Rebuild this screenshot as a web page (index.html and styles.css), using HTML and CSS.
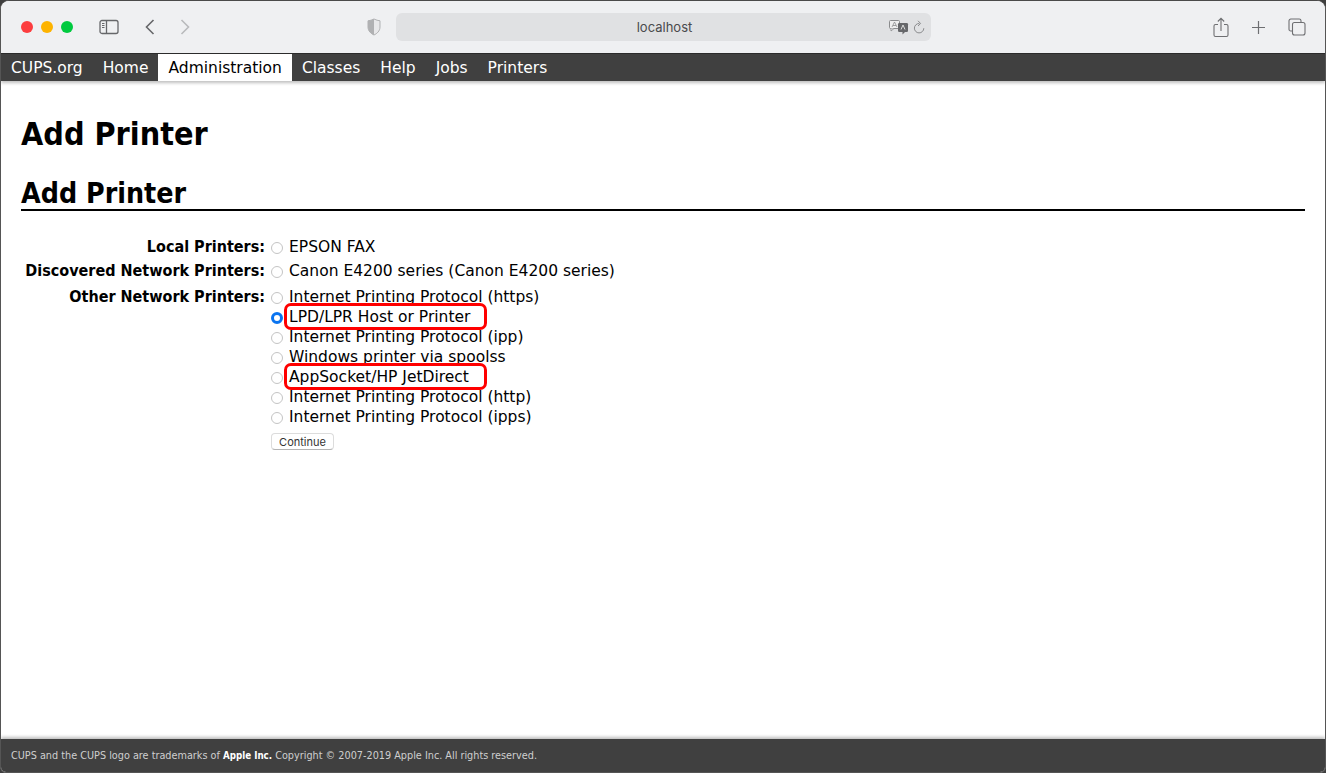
FILE: index.html
```html
<!DOCTYPE html>
<html lang="en">
<head>
<meta charset="utf-8">
<title>Add Printer - CUPS</title>
<link rel="stylesheet" href="styles.css">
</head>
<body>
<div class="window">
  <header class="toolbar">
    <div class="toolbar-left">
      <div class="lights">
        <span class="light red"></span><span class="light yellow"></span><span class="light green"></span>
      </div>
      <svg class="ic-sidebar" width="20" height="16" viewBox="0 0 20 16" fill="none" stroke="#66676a" stroke-width="1.3"><rect x="1" y="1.500" width="18" height="13" rx="2"/><path d="M7.500 1.500v13"/><path d="M3 4.500h2.500M3 6.500h2.500M3 8.500h2.500" stroke-width="1"/></svg>
      <svg class="ic-back" width="12" height="16" viewBox="0 0 12 16" fill="none" stroke="#66676a" stroke-width="1.600"><path d="M9.500 1 L2.500 8 L9.500 15"/></svg>
      <svg class="ic-forward" width="12" height="16" viewBox="0 0 12 16" fill="none" stroke="#b9babc" stroke-width="1.600"><path d="M2.500 1 L9.500 8 L2.500 15"/></svg>
    </div>
    <svg class="ic-shield" width="14" height="18" viewBox="0 0 14 18"><path d="M7 1 C9 2 11 2.600 13 2.800 V9 C13 13 10 15.600 7 17 C4 15.600 1 13 1 9 V2.800 C3 2.600 5 2 7 1Z" fill="#e8e8ea" stroke="#b0b1b3" stroke-width="1"/><path d="M7 1 C5 2 3 2.600 1 2.800 V9 C1 13 4 15.600 7 17Z" fill="#b0b1b3"/></svg>
    <div class="address">
      <span class="address-text">localhost</span>
      <div class="address-icons">
        <svg width="20" height="16" viewBox="0 0 20 16"><rect x="0.500" y="1.500" width="10" height="8" rx="1" fill="#eee" stroke="#8a8b8d"/><path d="M3 8 L5.500 3 L8 8 M4 6.500h3" fill="none" stroke="#8a8b8d" stroke-width=".8"/><path d="M2 9.500v2.500l3-2.500" fill="#eee" stroke="#8a8b8d" stroke-width=".8"/><rect x="9" y="4" width="10" height="9" rx="1.200" fill="#66676a"/><path d="M12 10.500 L14 6 L16 10.500" fill="none" stroke="#ddd" stroke-width="1"/><path d="M13.500 13 v2.500 l2.500-2.500" fill="#66676a"/></svg>
        <svg width="12" height="15" viewBox="0 0 12 15" fill="none" stroke="#8a8b8d" stroke-width="1"><path d="M6.300 3.500 A4.700 4.700 0 1 0 10.800 8.200"/><path d="M5 .8 L7.600 3.500 L5 6"/></svg>
      </div>
    </div>
    <div class="toolbar-right">
      <svg width="16" height="21" viewBox="0 0 16 21" fill="none" stroke="#6e6f72" stroke-width="1.100"><path d="M5 7.500H2.500a1.500 1.500 0 0 0-1.500 1.500v9a1.500 1.500 0 0 0 1.500 1.500h11a1.500 1.500 0 0 0 1.500-1.500v-9a1.500 1.500 0 0 0-1.500-1.500H11"/><path d="M8 14V1.500M4.800 4.500 8 1.300l3.200 3.200"/></svg>
      <svg width="15" height="15" viewBox="0 0 15 15" fill="none" stroke="#6e6f72" stroke-width="1.200"><path d="M7.500 1v13M1 7.500h13"/></svg>
      <svg width="18" height="18" viewBox="0 0 18 18" fill="none" stroke="#6e6f72" stroke-width="1.100"><path d="M4 13H2.800A1.800 1.800 0 0 1 1 11.200V2.800A1.800 1.800 0 0 1 2.800 1h8.400A1.800 1.800 0 0 1 13 2.800V4"/><rect x="4.500" y="4.500" width="12.500" height="12.500" rx="2"/></svg>
    </div>
  </header>

  <nav class="nav">
    <a class="nav-item">CUPS.org</a>
    <a class="nav-item">Home</a>
    <a class="nav-item active">Administration</a>
    <a class="nav-item">Classes</a>
    <a class="nav-item">Help</a>
    <a class="nav-item">Jobs</a>
    <a class="nav-item">Printers</a>
  </nav>

  <main class="content">
    <h1 class="title">Add Printer</h1>
    <h2 class="subtitle">Add Printer</h2>
    <form class="printer-form">
      <div class="label">Local Printers:</div>
      <div class="options">
        <label class="option"><span class="radio"></span>EPSON FAX</label>
      </div>
      <div class="label">Discovered Network Printers:</div>
      <div class="options">
        <label class="option"><span class="radio"></span>Canon E4200 series (Canon E4200 series)</label>
      </div>
      <div class="label group-gap">Other Network Printers:</div>
      <div class="options group-gap">
        <label class="option"><span class="radio"></span>Internet Printing Protocol (https)</label>
        <label class="option"><span class="radio checked"></span><span class="marked">LPD/LPR Host or Printer</span></label>
        <label class="option"><span class="radio"></span>Internet Printing Protocol (ipp)</label>
        <label class="option"><span class="radio"></span>Windows printer via spoolss</label>
        <label class="option"><span class="radio"></span><span class="marked">AppSocket/HP JetDirect</span></label>
        <label class="option"><span class="radio"></span>Internet Printing Protocol (http)</label>
        <label class="option"><span class="radio"></span>Internet Printing Protocol (ipps)</label>
        <button class="continue" type="button">Continue</button>
      </div>
    </form>
  </main>

  <footer class="footer">CUPS and the CUPS logo are trademarks of <b>Apple Inc.</b> Copyright © 2007-2019 Apple Inc. All rights reserved.</footer>
</div>
</body>
</html>
```
FILE: styles.css
```css
* { box-sizing: border-box; }
html, body { margin: 0; height: 100%; overflow: hidden; background: #3f3f3f; }
.window {
  height: 773px;
  display: flex;
  flex-direction: column;
  background: #fff;
  border: 1px solid #555;
  border-top-color: #4a4a4a;
  border-radius: 9px 9px 6px 6px;
  overflow: hidden;
  font-family: "DejaVu Sans", sans-serif;
  color: #000;
}
.toolbar {
  height: 53px;
  flex: none;
  background: #eff0f2;
  border-bottom: 1px solid #2c2c2c;
  display: flex;
  align-items: center;
  padding-right: 19px;
}
.toolbar-left { display: flex; align-items: center; width: 366px; padding-left: 20px; }
.lights { display: flex; gap: 8px; }
.light { width: 12px; height: 12px; border-radius: 50%; }
.red { background: #fc3d3f; }
.yellow { background: #fdb300; }
.green { background: #00ca3f; }
.ic-sidebar { margin-left: 26px; }
.ic-back { margin-left: 25px; }
.ic-forward { margin-left: 23px; }
.ic-shield { flex: none; }
.address {
  margin-left: 15px;
  width: 535px;
  height: 28px;
  border-radius: 6px;
  background: #e0e1e3;
  display: flex;
  align-items: center;
  justify-content: center;
  position: relative;
}
.address-text { font: 13px "Inter", sans-serif; color: #4a4a4c; padding-left: 2px; }
.address-icons { position: absolute; right: 6px; top: 6px; display: flex; gap: 4px; align-items: center; }
.toolbar-right { margin-left: auto; display: flex; align-items: center; gap: 22px; }
.nav {
  height: 27px;
  flex: none;
  background: #404040;
  display: flex;
  box-shadow: 0 2px 3px rgba(0,0,0,.25);
  position: relative;
  font-size: 15.5px;
  line-height: 27px;
}
.nav-item { padding: 1px 10px 0; color: #fff; }
.nav-item.active { background: #fff; color: #000; }
.content { flex: 1; padding: 0 20px; min-height: 0; }
.title {
  margin: 33px 0 0;
  font-size: 32px;
  line-height: 40px;
  font-weight: 700;
  font-stretch: condensed;
}
.subtitle {
  margin: 19px 0 0;
  padding-top: 4px;
  height: 38px;
  font-size: 28.3px;
  line-height: 34px;
  font-weight: 700;
  font-stretch: condensed;
  border-bottom: 2px solid #000;
}
.printer-form {
  margin-top: 26px;
  display: grid;
  grid-template-columns: 244px 1fr;
  column-gap: 6px;
  row-gap: 4px;
  font-size: 15.5px;
  line-height: 20px;
}
.label { font-size: 16px; font-weight: 700; font-stretch: condensed; text-align: right; }
.group-gap { margin-top: 2px; }
.options { display: flex; flex-direction: column; align-items: flex-start; }
.option { display: flex; align-items: center; height: 20px; }
.radio {
  width: 12px; height: 12px; flex: none; margin: 2px 6px 0 0;
  border-radius: 50%; background: #fff; border: 1px solid #c4c4c4;
}
.radio.checked { background: #fff; border: 3.5px solid #0a74f0; }
.marked { position: relative; }
.marked::after {
  content: "";
  box-sizing: border-box;
  position: absolute;
  left: -5px; width: 203px; top: -4px; bottom: -3px;
  border: 3px solid #f00;
  border-radius: 7px;
}
.continue {
  margin-top: 6px;
  width: 63px; height: 17px; padding: 0;
  font: 11px "Inter", sans-serif; color: #333;
  background: #fff; border: 1px solid #dcdcdc; border-bottom-color: #b4b4b4; border-radius: 4px;
}
.footer {
  height: 33px;
  flex: none;
  background: #404040;
  box-shadow: 0 -2px 3px rgba(0,0,0,.25);
  position: relative;
  color: #cfcfcf;
  font-size: 9.7px;
  line-height: 33px;
  padding-left: 10px;
}
.footer b { color: #fff; font-stretch: condensed; }
```
